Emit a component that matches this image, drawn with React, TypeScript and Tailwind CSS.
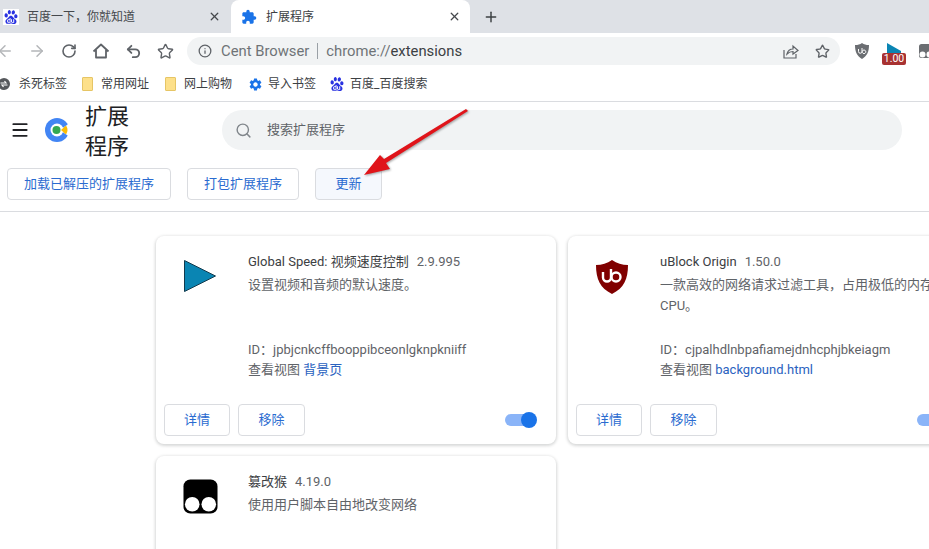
import { ArrowLeft, ArrowRight, Info, Menu, Plus, RotateCw, Search, Star, Undo2, X } from "lucide-react";
import { SiBaidu } from "react-icons/si";
import { MdExtension, MdSettings } from "react-icons/md";

const FONT = "font-['Roboto','Noto_Sans_CJK_SC',sans-serif]";

function Puzzle() {
  return <MdExtension className="size-[16px] text-[#1a73e8]" />;
}

function Baidu({ size = "size-[14px]" }: { size?: string }) {
  return <SiBaidu className={`${size} text-[#2932e1]`} />;
}

function FolderIcon() {
  return <span className="mr-2 block h-[14px] w-[11px] rounded-[1px] border border-[#e6c565] bg-[#fde08a]" />;
}

function KillTabsIcon() {
  return (
    <svg viewBox="0 0 12 12" className="-ml-[2px] mr-[9px] size-[12px]">
      <circle cx="6" cy="6" r="6" fill="#55585c" />
      <path d="M2.500 5 H8 L6.500 3 M9.500 7 H4 L5.500 9" fill="none" stroke="#fff" strokeWidth="1.200" />
    </svg>
  );
}

function Tab({ title, active, icon }: { title: string; active?: boolean; icon: React.ReactNode }) {
  return (
    <div
      className={`flex h-[33px] items-center ${active ? "ml-[2px] w-[239px] rounded-t-lg bg-white pl-[10px] pr-[9px] text-[#3c4043]" : "w-[229px] pl-[3px] pr-[8px] text-[#45484c]"}`}
    >
      <span className="flex w-[16px] justify-center">{icon}</span>
      <span className={`flex-1 text-[12px] ${active ? "ml-[9px]" : "ml-[8px]"}`}>{title}</span>
      <X className="size-[13px] text-[#45484c]" strokeWidth={2.4} />
    </div>
  );
}

function ToolButton({ children }: { children: React.ReactNode }) {
  return <span className="flex w-[32px] shrink-0 justify-center">{children}</span>;
}

function Bookmark({ icon, label, width }: { icon: React.ReactNode; label: string; width: string }) {
  return (
    <div className={`flex shrink-0 items-center ${width}`}>
      {icon}
      <span className="text-[12px] text-[#3c4043]">{label}</span>
    </div>
  );
}

function PageButton({ label, className = "" }: { label: string; className?: string }) {
  return (
    <button className={`h-[32px] rounded border border-[#dadce0] text-[13px] text-[#2a6bd0] ${className}`}>
      {label}
    </button>
  );
}

type Extension = {
  name: string;
  version: string;
  description: string;
  id?: string;
  view?: string;
  icon: React.ReactNode;
};

const extensions: Extension[] = [
  {
    name: "Global Speed: 视频速度控制",
    version: "2.9.995",
    description: "设置视频和音频的默认速度。",
    id: "jpbjcnkcffbooppibceonlgknpkniiff",
    view: "背景页",
    icon: (
      <svg viewBox="0 0 34 34" className="size-[34px]">
        <path d="M1.500 1.500 L32.500 17 L1.500 32.500 Z" fill="#0a85b3" stroke="#123a4d" strokeWidth="1" />
      </svg>
    ),
  },
  {
    name: "uBlock Origin",
    version: "1.50.0",
    description: "一款高效的网络请求过滤工具，占用极低的内存和CPU。",
    id: "cjpalhdlnbpafiamejdnhcphjbkeiagm",
    view: "background.html",
    icon: (
      <svg viewBox="0 0 34 36" className="h-[36px] w-[34px]">
        <path d="M17 1 C22 4.500 27 6 33 6 C33 20 29 29 17 35 C5 29 1 20 1 6 C7 6 12 4.500 17 1 Z" fill="#800000" />
        <path d="M8 13 V18.500 A4 4 0 0 0 16 18.500 V10" fill="none" stroke="#fff" strokeWidth="2.400" />
        <circle cx="21" cy="18" r="4.500" fill="none" stroke="#fff" strokeWidth="2.400" />
      </svg>
    ),
  },
  {
    name: "篡改猴",
    version: "4.19.0",
    description: "使用用户脚本自由地改变网络",
    icon: (
      <svg viewBox="0 0 36 36" className="size-[35px]">
        <rect x="0.500" y="0.500" width="35" height="35" rx="7" fill="#000" />
        <circle cx="9.500" cy="26" r="7.500" fill="#fff" />
        <circle cx="26.500" cy="26" r="7.500" fill="#fff" />
      </svg>
    ),
  },
];

function ExtensionCard({ ext }: { ext: Extension }) {
  return (
    <div className="flex h-[208px] w-[400px] shrink-0 flex-col rounded-lg bg-white shadow-[0_1px_3px_1px_rgba(60,64,67,0.2)]">
      <div className="flex h-[168px] pt-[17px]">
        <div className="flex w-[92px] shrink-0 justify-center pr-[4px] pt-[6px]">{ext.icon}</div>
        <div className="w-[296px] text-[13px] leading-[20px] text-[#5f6368]">
          <div className="flex h-[18px] items-center">
            <span className="text-[#3c4043]">{ext.name}</span>
            <span className="ml-[8px]">{ext.version}</span>
          </div>
          <div className="mt-[3px] h-[52px] leading-[21px]">{ext.description}</div>
          {ext.id && (
            <>
              <div className="mt-[14px]">ID：{ext.id}</div>
              <div>
                查看视图 <span className="text-[#2a62c0]">{ext.view}</span>
              </div>
            </>
          )}
        </div>
      </div>
      <div className="flex h-[32px] items-center gap-[8px] px-[8px]">
        <PageButton label="详情" className="w-[66px]" />
        <PageButton label="移除" className="w-[67px]" />
        <div className="relative ml-auto mr-[13px] h-[12px] w-[30px] rounded-full bg-[#8ab4f8]">
          <span className="absolute -right-[2px] -top-[2px] size-[16px] rounded-full bg-[#1a73e8]" />
        </div>
      </div>
    </div>
  );
}

export default function App() {
  return (
    <div className={`h-[549px] w-[929px] overflow-hidden bg-white ${FONT}`}>
      <div className="flex h-[33px] items-center bg-[#dee1e6]">
        <Tab title="百度一下，你就知道" icon={<span className="flex size-[16px] items-center justify-center bg-white"><Baidu /></span>} />
        <Tab title="扩展程序" active icon={<Puzzle />} />
        <Plus className="ml-[13px] size-[16px] text-[#3c4043]" strokeWidth={2.2} />
      </div>

      <div className="flex h-[36px] items-center -ml-[11px] w-[940px]">
        <ToolButton><ArrowLeft className="size-[18px] text-[#b4b6b9]" /></ToolButton>
        <ToolButton><ArrowRight className="size-[18px] text-[#b4b6b9]" /></ToolButton>
        <ToolButton><RotateCw className="size-[16px] text-[#5f6368]" strokeWidth={2.4} /></ToolButton>
        <ToolButton>
          <svg viewBox="0 0 18 18" className="size-[18px]" fill="none" stroke="#5f6368" strokeWidth="1.800" strokeLinejoin="round">
            <path d="M1.500 9.500 L9 2.500 L16.500 9.500 M4 8 V15.500 H14 V8" />
          </svg>
        </ToolButton>
        <ToolButton><Undo2 className="size-[17px] text-[#5f6368]" strokeWidth={2.6} /></ToolButton>
        <ToolButton><Star className="size-[17px] text-[#5f6368]" strokeWidth={2} /></ToolButton>
        <div className="ml-[6px] flex h-[28px] w-[653px] shrink-0 items-center rounded-full bg-[#f1f3f4] pl-[11px] pr-[10px] text-[14.800px]">
          <Info className="size-[14px] text-[#5f6368]" strokeWidth={2.2} />
          <span className="ml-[9px] text-[#6f7377]">Cent Browser</span>
          <span className="mx-[8px] h-[16px] w-px bg-[#9aa0a6]" />
          <span className="text-[#6f7377]">chrome://</span>
          <span className="text-[#3c4043]">extensions</span>
          <svg viewBox="0 0 16 16" className="ml-auto mr-[16px] size-[16px] text-[#5f6368]" fill="none" stroke="currentColor" strokeWidth="1.200">
            <path d="M1 7 V15 H13 V11" />
            <path d="M4 11 C5 7 8 6 10 6 V3 L15 7.500 L10 11 V8.500 C8 8.500 6 9 4 11 Z" />
          </svg>
          <Star className="size-[15px] text-[#5f6368]" strokeWidth={2.2} />
        </div>
        <div className="ml-[15px] flex items-center">
          <svg viewBox="0 0 14 16" className="h-[16px] w-[14px]">
            <path d="M7 0 C9 1.500 11 2 14 2 C14 9 12 13 7 16 C2 13 0 9 0 2 C3 2 5 1.500 7 0 Z" fill="#6b6e72" />
            <path d="M3.500 6 V8.500 A1.700 1.700 0 0 0 7 8.500 V5 M9 7 a1.800 1.800 0 1 0 0.010 0" fill="none" stroke="#fff" strokeWidth="1" />
          </svg>
          <div className="relative ml-[13px] mt-[6px] h-[22px] w-[24px]">
            <svg viewBox="0 0 14 10" className="absolute left-[5px] top-0 h-[10px] w-[14px]">
              <path d="M0 0 L14 8 V10 H0 Z" fill="#0a85b3" />
            </svg>
            <span className="absolute bottom-0 left-0 flex h-[12px] w-[24px] items-center justify-center rounded-[2px] bg-[#a83232] text-[10.500px] leading-none text-white">
              1.00
            </span>
          </div>
          <svg viewBox="0 0 14 14" className="ml-[13px] mt-[-1px] size-[14px]">
            <rect width="14" height="14" rx="2.500" fill="#6b6e72" />
            <circle cx="3.500" cy="10.500" r="3" fill="#fff" />
            <circle cx="10.500" cy="10.500" r="3" fill="#fff" />
          </svg>
        </div>
      </div>

      <div className="flex h-[32px] items-center pb-[2px]">
        <Bookmark icon={<KillTabsIcon />} label="杀死标签" width="w-[82px]" />
        <Bookmark icon={<FolderIcon />} label="常用网址" width="w-[83px]" />
        <Bookmark icon={<FolderIcon />} label="网上购物" width="w-[83px]" />
        <Bookmark icon={<MdSettings className="mr-[5px] size-[15px] text-[#1a73e8]" />} label="导入书签" width="w-[82px]" />
        <Bookmark icon={<span className="mr-[6px]"><Baidu /></span>} label="百度_百度搜索" width="w-[100px]" />
      </div>

      <div className="relative border-y border-[#dadce0] pb-[11px]">
        <div className="flex h-[56px] items-center">
          <Menu className="ml-[10px] size-[20px] text-[#202124]" strokeWidth={2.2} />
          <svg viewBox="0 0 24 24" className="ml-[15px] size-[24px]">
            <circle cx="12" cy="12" r="12" fill="#4285f4" />
            <circle cx="12" cy="12" r="6.500" fill="#fff" />
            <path d="M15 12 L24 5.500 V18.500 Z" fill="#fff" />
            <path d="M16 12 L21 7.500 A8 8 0 0 1 21 16.500 Z" fill="#fbbc05" />
            <circle cx="11.500" cy="12" r="4" fill="#34a853" />
          </svg>
          <h1 className="ml-[16px] mt-[4px] w-[48px] text-[22px] font-normal leading-[30px] text-[#202124]">扩展程序</h1>
          <div className="ml-[89px] flex h-[40px] w-[680px] items-center rounded-full bg-[#f1f3f4] pl-[13px]">
            <Search className="size-[17px] text-[#80868b]" />
            <span className="ml-[15px] text-[13px] text-[#5f6368]">搜索扩展程序</span>
          </div>
        </div>
        <div className="mt-[10px] flex gap-[16px] pl-[7px]">
          <PageButton label="加载已解压的扩展程序" className="w-[164px]" />
          <PageButton label="打包扩展程序" className="w-[112px]" />
          <PageButton label="更新" className="w-[67px] bg-[#f5f8fd]" />
        </div>
        <svg viewBox="0 0 110 70" className="absolute left-[362px] top-[7px] h-[70px] w-[110px] drop-shadow-[1px_1px_1px_rgba(0,0,0,0.35)]">
          <path d="M106 2 L24 54 L28 60 L2 66 L18 46 L22 50 L104 0 Z" fill="#e0141a" />
        </svg>
      </div>

      <div className="ml-[156px] flex w-[812px] flex-wrap gap-[12px] pt-[24px]">
        {extensions.map((ext) => (
          <ExtensionCard key={ext.name} ext={ext} />
        ))}
      </div>
    </div>
  );
}
